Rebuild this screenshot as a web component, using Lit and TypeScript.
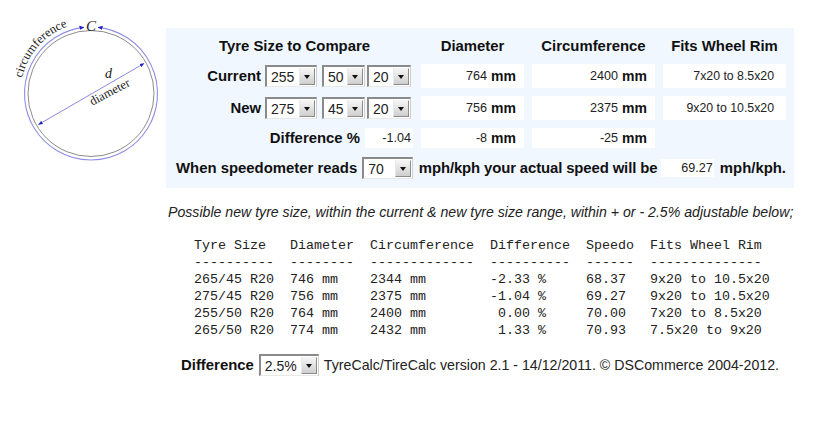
import { LitElement, html, css, svg } from "lit";
import { customElement, property } from "lit/decorators.js";

@customElement("fake-select")
class FakeSelect extends LitElement {
  @property() value = "";
  @property({ type: Array }) options: string[] = [];
  static styles = css`
    :host { display: inline-flex; box-sizing: border-box; height: 22px; background: #fff;
      border-top: 2px solid #8a8a8a; border-left: 2px solid #8a8a8a;
      border-right: 1px solid #d4d0c8; border-bottom: 1px solid #e8e8e8; }
    select { appearance: none; -webkit-appearance: none; flex: 1; min-width: 0; border: 0; outline: 0; margin: 0;
      padding: 0 0 0 4px; background: #fff; color: #222; font: 14px "Liberation Sans", Arial, sans-serif; }
    .btn { width: 16px; margin: 1px 1px 1px 0; box-sizing: border-box; display: flex; align-items: center; justify-content: center;
      background: linear-gradient(#f4f4f4, #cfcfcf); border: 1px solid; border-color: #f4f4f4 #8c8c8c #8c8c8c #e8e8e8; }
    .btn i { display: block; width: 0; height: 0; border: 3.5px solid transparent; border-top: 4px solid #111; border-bottom: 0; }
  `;
  render() {
    return html`<select aria-label="value">
        ${this.options.map((o) => html`<option ?selected=${o === this.value}>${o}</option>`)}
      </select><span class="btn"><i></i></span>`;
  }
}

const diagram = svg`
  <defs>
    <marker id="ah" viewBox="0 0 6 6" refX="5.5" refY="3" markerWidth="4.5" markerHeight="4.5" orient="auto-start-reverse">
      <path d="M0 0.5 L6 3 L0 5.5 Z" fill="#2222cc"/>
    </marker>
    <path id="cf" d="M 22 78 A 71 71 0 0 1 69 26"/>
  </defs>
  <circle cx="91" cy="93.5" r="63" fill="none" stroke="#8c8c8c" stroke-width="1"/>
  <path d="M 84 27.4 A 66.5 66.5 0 1 0 98 27.4" fill="none" stroke="#8f8fe6" stroke-width="1.1" marker-start="url(#ah)" marker-end="url(#ah)"/>
  <line x1="38.5" y1="124.5" x2="144" y2="63.5" stroke="#8a8ae0" stroke-width="1" marker-start="url(#ah)" marker-end="url(#ah)"/>
  <text class="d" x="91" y="31" text-anchor="middle" font-size="15">C</text>
  <text class="d" x="108.5" y="78" text-anchor="middle" font-size="14">d</text>
  <text x="0" y="0" font-size="12.5" text-anchor="middle" transform="translate(111.5 95.5) rotate(-28)">diameter</text>
  <text font-size="12.5"><textPath href="#cf">circumference</textPath></text>
`;

@customElement("app-root")
class AppRoot extends LitElement {
  static styles = css`
    :host { display: block; width: 828px; height: 422px; background: #fff; color: #111;
      font: 14.2px "Liberation Sans", Arial, sans-serif; overflow: hidden; }
    .top { display: flex; padding-top: 28px; }
    .fig { width: 166px; flex: none; margin-top: -28px; height: 188px; }
    .fig svg { display: block; }
    .fig text { font-family: "Liberation Serif", "Times New Roman", serif; fill: #222; }
    .fig text.d { font-style: italic; }
    .panel { width: 628px; box-sizing: border-box; background: #f0f7ff; padding: 8px 7px 8px 0;
      display: grid; grid-template-columns: 247px 103px 123px 123px; column-gap: 8px; row-gap: 8px;
      grid-template-rows: 20px 24px 24px 20px 24px; font-weight: bold; font-size: 14.9px; align-items: center; }
    .h { text-align: center; white-space: nowrap; }
    .h1 { padding-left: 10px; }
    .lab { display: flex; justify-content: flex-end; align-items: center; gap: 4px; }
    .box { background: #fff; align-self: stretch; display: flex; align-items: center; justify-content: flex-end;
      padding-right: 8px; gap: 4px; font-weight: normal; font-size: 12.6px; color: #222; }
    .box b { font-size: 14px; color: #111; }
    .rim { padding-right: 12px; font-size: 12.3px; }
    .pct { width: 48px; height: 20px; box-sizing: border-box; background: #fff; display: flex; align-items: center; justify-content: flex-end;
      margin-left: 1px; padding-right: 2px; font-weight: normal; font-size: 12.6px; color: #222; }
    .w1 { width: 52px; }
    .w2 { width: 43px; margin-left: 1px; }
    .w3 { width: 44px; margin: 0 2px 0 -2px; }
    .speed { grid-column: 1 / -1; display: flex; align-items: center; padding-left: 10px; white-space: nowrap; }
    .speed fake-select { width: 52px; margin: 0 6px 0 5px; }
    .sp { letter-spacing: -0.12px; }
    .res { width: 54px; height: 18px; margin: 0 6px 0 4px; background: #fff; display: flex; align-items: center; justify-content: flex-end;
      padding-right: 1px; box-sizing: border-box; font-weight: normal; font-size: 12.6px; color: #222; }
    .intro { margin: 16px 0 0 168px; font-style: italic; font-size: 14.13px; line-height: 17px; color: #222; white-space: nowrap; }
    pre { margin: 16px 0 0 194px; font: 13.333px/17px "Liberation Mono", "Courier New", monospace; color: #222; }
    .foot { margin: 15px 0 0 181px; display: flex; align-items: center; color: #222; white-space: nowrap; }
    .foot b { color: #111; margin-right: 5px; font-size: 14.9px; }
    .foot fake-select { width: 60px; margin-right: 5px; }
  `;

  render() {
    const w = ["225", "235", "245", "255", "265", "275", "285"];
    const p = ["40", "45", "50", "55"];
    const r = ["18", "19", "20", "21"];
    const table = `Tyre Size   Diameter  Circumference  Difference  Speedo  Fits Wheel Rim
----------  --------  -------------  ----------  ------  --------------
265/45 R20  746 mm    2344 mm        -2.33 %     68.37   9x20 to 10.5x20
275/45 R20  756 mm    2375 mm        -1.04 %     69.27   9x20 to 10.5x20
255/50 R20  764 mm    2400 mm         0.00 %     70.00   7x20 to 8.5x20
265/50 R20  774 mm    2432 mm         1.33 %     70.93   7.5x20 to 9x20`;
    return html`
      <div class="top">
        <div class="fig"><svg width="166" height="188" viewBox="0 0 166 188">${diagram}</svg></div>
        <div class="panel">
          <div class="h h1">Tyre Size to Compare</div>
          <div class="h">Diameter</div>
          <div class="h">Circumference</div>
          <div class="h">Fits Wheel Rim</div>

          <div class="lab">Current
            <fake-select class="w1" .options=${w} value="255"></fake-select>
            <fake-select class="w2" .options=${p} value="50"></fake-select>
            <fake-select class="w3" .options=${r} value="20"></fake-select>
          </div>
          <div class="box">764 <b>mm</b></div>
          <div class="box">2400 <b>mm</b></div>
          <div class="box rim">7x20 to 8.5x20</div>

          <div class="lab">New
            <fake-select class="w1" .options=${w} value="275"></fake-select>
            <fake-select class="w2" .options=${p} value="45"></fake-select>
            <fake-select class="w3" .options=${r} value="20"></fake-select>
          </div>
          <div class="box">756 <b>mm</b></div>
          <div class="box">2375 <b>mm</b></div>
          <div class="box rim">9x20 to 10.5x20</div>

          <div class="lab">Difference %<span class="pct">-1.04</span></div>
          <div class="box">-8 <b>mm</b></div>
          <div class="box">-25 <b>mm</b></div>
          <div></div>

          <div class="speed">When speedometer reads
            <fake-select .options=${["50", "60", "70", "80"]} value="70"></fake-select>
            <span class="sp">mph/kph your actual speed will be</span>
            <span class="res">69.27</span>mph/kph.
          </div>
        </div>
      </div>
      <div class="intro">Possible new tyre size, within the current &amp; new tyre size range, within + or - 2.5% adjustable below;</div>
      <pre>${table}</pre>
      <div class="foot"><b>Difference</b>
        <fake-select .options=${["1.0%", "2.5%", "5.0%"]} value="2.5%"></fake-select>
        TyreCalc/TireCalc version 2.1 - 14/12/2011. © DSCommerce 2004-2012.
      </div>
    `;
  }
}
